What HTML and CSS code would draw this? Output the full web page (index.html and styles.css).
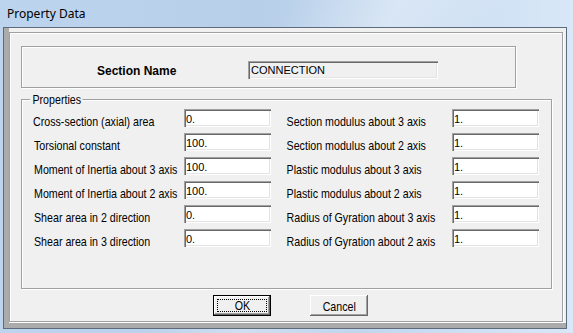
FILE: index.html
```html
<!DOCTYPE html>
<html lang="en">

<head>
    <meta charset="UTF-8">
    <meta name="viewport" content="width=device-width, initial-scale=1.0">
    <title>Property Data</title>
    <link rel="stylesheet" href="styles.css">
</head>

<body>
    <div class="titlebar">
        <span class="title">Property Data</span>
    </div>

    <div class="dialog">
        <div class="frame">
            <div class="name-box">
                <span class="name-label">Section Name</span>
                <div class="field readonly">CONNECTION</div>
            </div>

            <div class="group">
                <span class="legend">Properties</span>
                <div class="prop-grid">
                    <label class="first">Cross-section (axial) area</label>
                    <input type="text" class="field" value="0.">
                    <label class="right">Section modulus about 3 axis</label>
                    <input type="text" class="field" value="1.">

                    <label>Torsional constant</label>
                    <input type="text" class="field" value="100.">
                    <label class="right">Section modulus about 2 axis</label>
                    <input type="text" class="field" value="1.">

                    <label>Moment of Inertia about 3 axis</label>
                    <input type="text" class="field" value="100.">
                    <label class="right">Plastic modulus about 3 axis</label>
                    <input type="text" class="field" value="1.">

                    <label>Moment of Inertia about 2 axis</label>
                    <input type="text" class="field" value="100.">
                    <label class="right">Plastic modulus about 2 axis</label>
                    <input type="text" class="field" value="1.">

                    <label>Shear area in 2 direction</label>
                    <input type="text" class="field" value="0.">
                    <label class="right">Radius of Gyration about 3 axis</label>
                    <input type="text" class="field" value="1.">

                    <label>Shear area in 3 direction</label>
                    <input type="text" class="field" value="0.">
                    <label class="right">Radius of Gyration about 2 axis</label>
                    <input type="text" class="field" value="1.">
                </div>
            </div>

            <div class="buttons">
                <button class="btn default"><span class="focus"><span class="btn-text">OK</span></span></button>
                <button class="btn"><span class="btn-text">Cancel</span></button>
            </div>
        </div>
    </div>
</body>

</html>
```

FILE: styles.css
```css
:root {
    --face: #f0f0f0;
    --shadow: #a0a0a0;
    --dark-shadow: #696969;
    --light: #e3e3e3;
    --highlight: #ffffff;
    --frame-edge: #5d6b7c;
    --ui-font: 'Liberation Sans', Arial, sans-serif;
    /* no narrow face installed, so squeeze Arial-width text */
    --narrow: scaleX(0.82);
}

* {
    box-sizing: border-box;
    margin: 0;
    padding: 0;
}

body {
    width: 573px;
    height: 333px;
    overflow: hidden;
    font-family: var(--ui-font);
    font-size: 13px;
    color: #000;
    background:
        linear-gradient(115deg, rgba(255, 255, 255, 0) 40%, rgba(255, 255, 255, 0.35) 55%, rgba(255, 255, 255, 0) 70%),
        linear-gradient(90deg, #bcd4ee 0%, #b7cfe9 45%, #c9dcf1 75%, #d9e8f8 100%);
}

/* Title bar */
.titlebar {
    height: 27px;
    display: flex;
    align-items: center;
    padding-left: 7px;
}

.title {
    font-family: 'Noto Sans', 'Liberation Sans', sans-serif;
    font-size: 12px;
    line-height: 16px;
    margin-top: 1px;
}

/* Window body */
.dialog {
    width: 564px;
    height: 302px;
    margin-left: 3px;
    background-color: var(--face);
    border: 1px solid var(--frame-edge);
    box-shadow: inset 5px 0 #ababab, inset 0 -5px #ababab;
    padding: 4px 0 0 5px;
}

.frame {
    width: 554px;
    height: 290px;
    border: 1px solid var(--shadow);
    box-shadow: inset 1px 1px var(--highlight), 1px 1px var(--highlight);
    padding: 13px 0 0 11px;
}

/* Section name */
.name-box {
    width: 495px;
    height: 42px;
    border: 1px solid var(--shadow);
    box-shadow: inset 1px 1px var(--highlight), 1px 1px var(--highlight);
    display: flex;
    align-items: flex-start;
    padding: 14px 0 0 75px;
}

.name-label {
    width: 151px;
    font-weight: 700;
    font-size: 12px;
    line-height: 18px;
    margin-top: 1px;
}

.field {
    width: 87px;
    height: 18px;
    border: none;
    outline: none;
    background-color: #fff;
    box-shadow:
        inset 1px 1px var(--shadow),
        inset 2px 2px var(--dark-shadow),
        inset -1px -1px var(--highlight),
        inset -2px -2px var(--light);
    padding: 3px 2px 1px 2px;
    font-family: var(--ui-font);
    font-size: 11px;
    line-height: 12px;
    color: #000;
}

.field.readonly {
    width: 190px;
    background-color: var(--face);
    padding-left: 3px;
}

/* Properties group */
.group {
    width: 531px;
    height: 190px;
    margin-top: 11px;
    border: 1px solid var(--shadow);
    box-shadow: inset 1px 1px var(--highlight), 1px 1px var(--highlight);
    padding: 0 0 0 12px;
}

.legend {
    display: block;
    width: max-content;
    margin: -8px 0 0 -4px;
    padding: 0 2px 0 3px;
    background-color: var(--face);
    font-size: 13px;
    line-height: 16px;
    transform: var(--narrow);
    transform-origin: left center;
}

.prop-grid {
    display: grid;
    grid-template-columns: 150px 87px 181px 87px;
    grid-auto-rows: 18px;
    row-gap: 6px;
    margin-top: 1px;
}

.prop-grid label {
    line-height: 18px;
    margin-top: 4px;
    white-space: nowrap;
    transform: var(--narrow);
    transform-origin: left center;
}

.prop-grid label.first {
    margin-left: -1px;
}

.prop-grid label.right {
    padding-left: 19px;
}

/* Buttons */
.buttons {
    display: flex;
    gap: 39px;
    margin-top: 6px;
    padding-left: 192px;
}

.btn {
    width: 58px;
    height: 21px;
    border: none;
    background-color: var(--face);
    font-family: var(--ui-font);
    font-size: 13px;
    color: #000;
    box-shadow:
        inset -1px -1px var(--dark-shadow),
        inset 1px 1px var(--highlight),
        inset -2px -2px var(--shadow);
    display: flex;
    align-items: center;
    justify-content: center;
    padding-top: 1px;
}

.btn.default {
    border: 1px solid #000;
    padding: 3px;
}

.btn-text {
    display: inline-block;
    transform: var(--narrow);
}

.focus {
    flex: 1;
    align-self: stretch;
    border: 1px dotted #000;
    display: flex;
    align-items: center;
    justify-content: center;
}
```
